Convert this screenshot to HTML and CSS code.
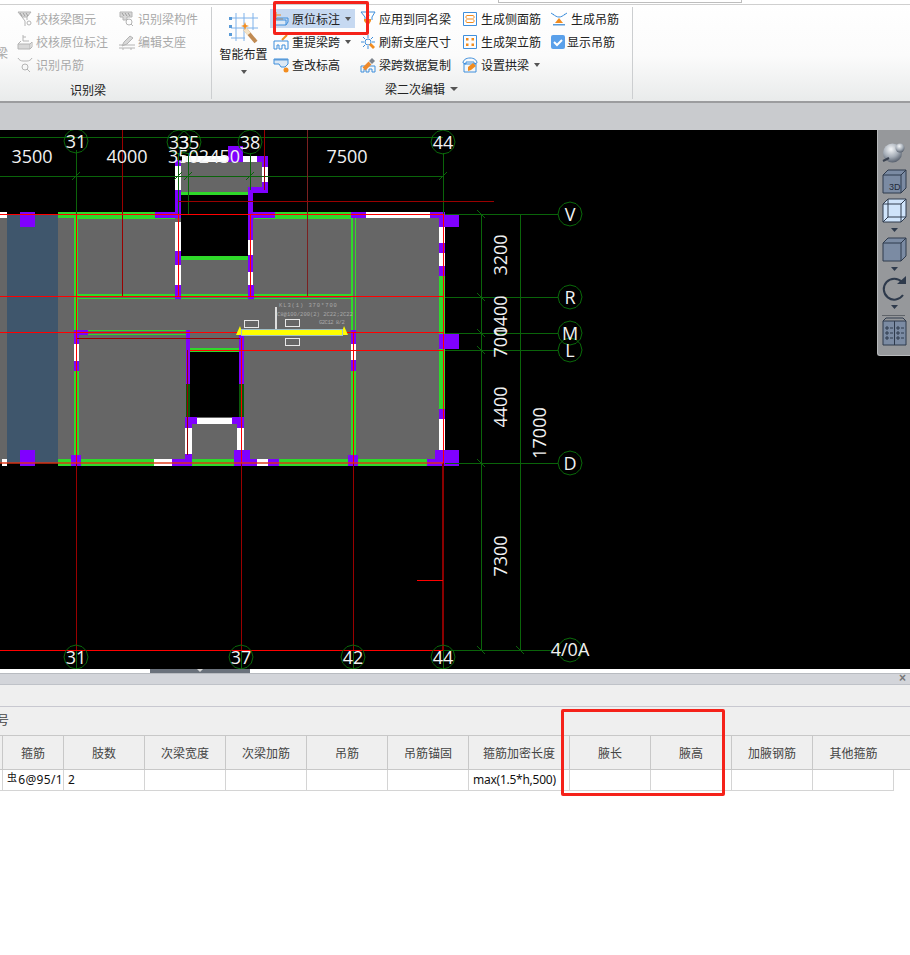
FILE: index.html
```html
<!DOCTYPE html>
<html lang="zh-CN">
<head>
<meta charset="utf-8">
<title>梁二次编辑</title>
<link rel="stylesheet" href="styles.css">
</head>
<body>
<div class="page">
  <header class="ribbon">
    <div class="topstrip"><div class="topbox"></div></div>
    <div class="groups">
      <section class="group g1">
        <div class="rows rows1 off">
          <span class="stub">梁</span>
          <div class="item"><svg class="ic" viewBox="0 0 16 16"><path class="gf" d="M1 1h13l-4 5H5z"/><path class="gl" d="M5 6l3 4v5M10 6v3"/><path class="gh" d="M3 2l2 3M6 2l2 3M9 2l2 3"/><circle class="gl" cx="12" cy="12" r="2"/></svg><span>校核梁图元</span></div>
          <div class="item"><svg class="ic" viewBox="0 0 16 16"><path class="gf" d="M1 1h12v5H8v3H4V6H1z"/><path class="gh" d="M3 2l2 3M6 2l2 3M9 2l2 3"/><circle class="gl" cx="10" cy="11" r="3"/><path class="gl" d="M12 13l2 2"/></svg><span>识别梁构件</span></div>
          <div class="item"><svg class="ic" viewBox="0 0 16 16"><path class="gl" d="M6 1v6h6M6 3h3"/><path class="gf" d="M1 10h12v5H1z"/><path class="gl" d="M1 10l3-3M13 10l2-2v5l-2 2"/></svg><span>校核原位标注</span></div>
          <div class="item"><svg class="ic" viewBox="0 0 16 16"><path class="gf" d="M11 2l3 2-6 6-5 2 2-4z"/><path class="gl" d="M0 11h16M0 14h16M4 14v2M12 14v2"/></svg><span>编辑支座</span></div>
          <div class="item"><svg class="ic" viewBox="0 0 16 16"><path class="gl" d="M1 1c1 2 3 3 5 3h4c2 0 4-1 5-3"/><circle class="gl" cx="8" cy="10" r="3"/><path class="gl" d="M10 12l3 3"/></svg><span>识别吊筋</span></div>
        </div>
        <div class="glabel lab1">识别梁</div>
      </section>
      <section class="group g2">
        <div class="main2">
          <div class="big">
            <svg class="bigic" viewBox="0 0 32 32">
              <path class="bigl" d="M8 1v28M16 1v28M25 1v17M3 6h27M3 16h27M3 26h14"/>
              <path class="bf" d="M1 5h3v3H1zM1 13h3v3H1zM1 21h3v3H1z"/>
              <path class="wand" d="M17 17l11 13"/>
              <path class="wandtip" d="M17 17l4 5"/>
              <path class="or" d="M17 10l1 3 3 1-3 1-1 3-1-3-3-1 3-1z"/>
            </svg>
            <span class="bigt">智能布置</span>
            <i class="caret"></i>
          </div>
          <div class="rows rows2">
            <div class="item hot"><svg class="ic" viewBox="0 0 16 16"><path class="ol" d="M3 1v7h7M3 4h5"/><path class="bb" d="M1 9h12v5H1z"/><path class="bl" d="M1 9l3-2h11v4l-2 3"/></svg><span>原位标注</span><i class="caret"></i></div>
            <div class="item"><svg class="ic" viewBox="0 0 16 16"><path class="bl" d="M1 1h14l-3 5v3M1 1l4 5v3M8 1l1 4"/><path class="or" d="M4 8h7v2l-3 5-4-5z"/></svg><span>应用到同名梁</span></div>
            <div class="item"><svg class="ic" viewBox="0 0 16 16"><path class="bl" d="M1.500 1.500h13v13h-13z"/><path class="ol" d="M4 7V5.500C4 5 4.500 4.500 5 4.500h6c.5 0 1 .5 1 1V7M4 9v1.500c0 .5.5 1 1 1h6c.5 0 1-.5 1-1V9M4 8h8"/></svg><span>生成侧面筋</span></div>
            <div class="item"><svg class="ic" viewBox="0 0 16 16"><path class="bl" d="M2 3c2 2 4 3 6 3s4-1 6-3M0 2l3 2M16 2l-3 2"/><path class="or" d="M8 7l4 5H4z"/><path class="bf" d="M2 13h12v1.500H2z"/></svg><span>生成吊筋</span></div>
            <div class="item"><svg class="ic" viewBox="0 0 16 16"><path class="ol2" d="M14 1L9 6"/><path class="bl" d="M1 7h14v8h-3v-4H9v4H6v-4H4v4H1z"/></svg><span>重提梁跨</span><i class="caret"></i></div>
            <div class="item"><svg class="ic" viewBox="0 0 16 16"><circle class="bl" cx="8" cy="8" r="3"/><path class="bl" d="M8 1v3M8 12v3M1 8h3M12 8h3M3 3l2 2M13 3l-2 2M3 13l2-2"/><path class="or" d="M11 9l4 4-2 2-4-4z"/></svg><span>刷新支座尺寸</span></div>
            <div class="item"><svg class="ic" viewBox="0 0 16 16"><path class="bl" d="M1.500 1.500h13v13h-13z"/><path class="or" d="M4 4h2.500v2.500H4zM9.500 4H12v2.500H9.500zM4 9.500h2.500V12H4zM9.500 9.500H12V12H9.500z"/></svg><span>生成架立筋</span></div>
            <div class="item chk"><svg class="ic14" viewBox="0 0 14 14"><rect class="chkbox" width="14" height="14" rx="2"/><path class="chkmark" d="M3 7l3 3 5-5"/></svg><span>显示吊筋</span></div>
            <div class="item"><svg class="ic" viewBox="0 0 16 16"><path class="bb" d="M1 2h14v5l-3 3H8L6 7H1z"/><path class="bf" d="M1 2h14v1.500H1z"/><circle class="or" cx="13" cy="13" r="2.500"/></svg><span>查改标高</span></div>
            <div class="item"><svg class="ic" viewBox="0 0 16 16"><path class="bl" d="M1 9h14v6h-3v-3H9v3H6v-3H4v3H1z"/><path class="wide" d="M4 12l6-6"/><path class="gf2" d="M9 4l3-3 3 3-3 3z"/></svg><span>梁跨数据复制</span></div>
            <div class="item"><svg class="ic" viewBox="0 0 16 16"><path class="bl" d="M1 6C1 3 4 1 8 1s7 2 7 5l-3 1V5H4v2zM2 7h12v8H2z"/><path class="or" d="M6 10l5-4 3 3-5 4-3 1z"/></svg><span>设置拱梁</span><i class="caret"></i></div>
          </div>
        </div>
        <div class="glabel lab2">梁二次编辑<i class="caret car2"></i></div>
      </section>
    </div>
  </header>
  <div class="band"></div>

  <main class="canvas">
    <svg class="cad" width="910" height="539" viewBox="0 130 910 539">
      <defs>
        <polygon id="bub" points="12,0 10.4,6 6,10.4 0,12 -6,10.4 -10.4,6 -12,0 -10.4,-6 -6,-10.4 0,-12 6,-10.4 10.4,-6"/>
      </defs>
      <!-- slabs -->
      <g class="crisp">
        <rect class="floor" x="0" y="214" width="443" height="249"/>
        <rect class="floor" x="178" y="160" width="86" height="27"/>
        <rect class="floor" x="178" y="187" width="72" height="6"/>
        <rect class="hole" x="181" y="195" width="67" height="61"/>
        <rect class="hole" x="190" y="352" width="49" height="65"/>
        <rect class="slate" x="7" y="214" width="51" height="249"/>
      </g>
      <!-- thin inner green -->
      <g class="crisp">
        <rect class="gr" x="74" y="218" width="4" height="112"/>
        <rect class="gr" x="78" y="218" width="97" height="1"/>
        <rect class="gr" x="78" y="294" width="97" height="2"/>
        <rect class="gr" x="78" y="298" width="273" height="1"/>
        <rect class="gr" x="181" y="294" width="67" height="2"/>
        <rect class="gr" x="254" y="294" width="97" height="2"/>
        <rect class="gr" x="254" y="218" width="97" height="1"/>
        <rect class="gr" x="351" y="218" width="2" height="112"/>
        <rect class="gr" x="355" y="218" width="1" height="112"/>
        <rect class="gr" x="354" y="371" width="2" height="84"/>
        <rect class="gr" x="351" y="371" width="2" height="84"/>
        <rect class="gr" x="74" y="371" width="5" height="84"/>
        <rect class="gr" x="88" y="330" width="98" height="1"/>
        <rect class="gr" x="88" y="334" width="98" height="1"/>
        <rect class="gr" x="181" y="192" width="67" height="3"/>
        <rect class="gr" x="181" y="256" width="67" height="4"/>
        <rect class="gr" x="190" y="348" width="49" height="4"/>
        <rect class="gr" x="439" y="276" width="6" height="58"/>
        <rect class="gr" x="439" y="349" width="6" height="60"/>
        <rect class="dg" x="186" y="384" width="4" height="33"/>
        <rect class="dg" x="239" y="384" width="5" height="33"/>
      </g>
      <!-- top wall -->
      <g class="crisp">
        <rect class="gr" x="58" y="212" width="97" height="6"/>
        <rect class="gr" x="275" y="212" width="76" height="6"/>
        <rect class="wh" x="0" y="212" width="7" height="6"/>
        <rect class="pu" x="155" y="212" width="23" height="6"/>
        <rect class="pu" x="178" y="212" width="3" height="6"/>
        <rect class="pu" x="250" y="212" width="25" height="6"/>
        <rect class="pu" x="351" y="212" width="15" height="6"/>
        <rect class="wh" x="366" y="212" width="64" height="6"/>
        <rect class="pu" x="430" y="212" width="15" height="6"/>
        <rect class="pu" x="20" y="212" width="15" height="15"/>
        <rect class="pu" x="443" y="215" width="16" height="12"/>
      </g>
      <!-- bottom wall -->
      <g class="crisp">
        <rect class="wh" x="2" y="459" width="5" height="7"/>
        <rect class="gr" x="58" y="459" width="13" height="7"/>
        <rect class="gr" x="81" y="459" width="73" height="7"/>
        <rect class="wh" x="154" y="459" width="18" height="7"/>
        <rect class="pu" x="172" y="459" width="20" height="7"/>
        <rect class="gr" x="192" y="459" width="42" height="7"/>
        <rect class="pu" x="250" y="459" width="7" height="7"/>
        <rect class="wh" x="257" y="459" width="11" height="7"/>
        <rect class="pu" x="268" y="459" width="11" height="7"/>
        <rect class="gr" x="279" y="459" width="69" height="7"/>
        <rect class="gr" x="358" y="459" width="69" height="7"/>
        <rect class="pu" x="427" y="459" width="8" height="7"/>
        <rect class="pu" x="20" y="450" width="15" height="16"/>
        <rect class="pu" x="71" y="455" width="10" height="11"/>
        <rect class="pu" x="234" y="450" width="16" height="16"/>
        <rect class="pu" x="348" y="455" width="10" height="11"/>
        <rect class="pu" x="435" y="450" width="24" height="16"/>
      </g>
      <!-- right wall -->
      <g class="crisp">
        <rect class="pu" x="439" y="215" width="6" height="12"/>
        <rect class="wh" x="439" y="227" width="6" height="16"/>
        <rect class="pu" x="439" y="243" width="6" height="10"/>
        <rect class="wh" x="439" y="253" width="6" height="13"/>
        <rect class="pu" x="439" y="266" width="6" height="10"/>
        <rect class="pu" x="439" y="334" width="20" height="15"/>
        <rect class="pu" x="439" y="409" width="6" height="10"/>
        <rect class="wh" x="439" y="419" width="6" height="31"/>
      </g>
      <!-- left + inner walls -->
      <g class="crisp">
        <rect class="pu" x="74" y="330" width="14" height="5"/>
        <rect class="pu" x="74" y="335" width="5" height="9"/>
        <rect class="wh" x="74" y="344" width="5" height="17"/>
        <rect class="pu" x="74" y="361" width="5" height="10"/>
        <rect class="pu" x="186" y="330" width="4" height="54"/>
        <rect class="pu" x="239" y="335" width="5" height="49"/>
        <rect class="pu" x="185" y="417" width="12" height="7"/>
        <rect class="wh" x="197" y="418" width="35" height="6"/>
        <rect class="pu" x="232" y="417" width="12" height="7"/>
        <rect class="pu" x="185" y="424" width="7" height="4"/>
        <rect class="pu" x="237" y="424" width="7" height="4"/>
        <rect class="wh" x="185" y="428" width="7" height="26"/>
        <rect class="pu" x="185" y="454" width="7" height="5"/>
        <rect class="wh" x="237" y="428" width="7" height="22"/>
        <rect class="pu" x="351" y="330" width="5" height="14"/>
        <rect class="wh" x="351" y="344" width="5" height="16"/>
        <rect class="pu" x="351" y="360" width="5" height="11"/>
      </g>
      <!-- annex -->
      <g class="crisp">
        <rect class="wh" x="175" y="166" width="6" height="24"/>
        <rect class="pu" x="175" y="160" width="6" height="6"/>
        <rect class="pu" x="175" y="190" width="6" height="22"/>
        <rect class="wh" x="175" y="222" width="6" height="29"/>
        <rect class="pu" x="175" y="251" width="6" height="14"/>
        <rect class="wh" x="175" y="265" width="6" height="20"/>
        <rect class="pu" x="175" y="285" width="6" height="14"/>
        <rect class="wh" x="182" y="156" width="75" height="6"/>
        <rect class="pu" x="228" y="146" width="15" height="16"/>
        <rect class="pu" x="257" y="156" width="11" height="6"/>
        <rect class="pu" x="262" y="162" width="6" height="5"/>
        <rect class="wh" x="262" y="167" width="6" height="15"/>
        <rect class="pu" x="262" y="182" width="6" height="11"/>
        <rect class="pu" x="248" y="187" width="20" height="6"/>
        <rect class="pu" x="248" y="193" width="5" height="47"/>
        <rect class="wh" x="248" y="240" width="5" height="15"/>
        <rect class="pu" x="248" y="255" width="5" height="17"/>
        <rect class="wh" x="248" y="272" width="5" height="13"/>
        <rect class="pu" x="248" y="285" width="6" height="14"/>
      </g>
      <!-- dark green dimension + axes -->
      <g class="crisp dim">
        <path d="M0 137.500H443M0 176.500H443"/>
        <path d="M76.500 150V214M178.500 153V214M188.500 153V214M250.500 153V190M443.500 153V214"/>
        <path d="M445 214.500H558M445 297.500H558M445 333.500H558M445 350.500H558M445 463.500H558M443 650.500H552"/>
        <path d="M481.500 214V650M520.500 214V650"/>
        <path d="M76.500 645V669M241.500 645V669M353.500 645V669M443.500 645V669"/>
      </g>
      <path class="tick" d="M72 180l8-8M174 180l8-8M184 180l8-8M246 180l8-8M439 180l8-8"/>
      <path class="tick" d="M477 210l8 8M477 293l8 8M477 329l8 8M477 346l8 8M477 459l8 8M477 646l8 8M516 646l8 8"/>
      <!-- red axes -->
      <g class="crisp">
        <path class="drk" d="M122.500 130V297M264.500 130V190M76.500 463V650M187.500 350V455M241.500 463V650M353.500 463V650"/>
        <path class="brn" d="M307.500 130V297"/>
        <path class="drk2" d="M443 463V650"/>
        <path class="drk" d="M178 201H494"/>
        <path class="drk" d="M76 338.500H240"/>
        <path class="red" d="M0 214.500H443M0 296.500H443M0 332.500H443M190 350.500H443M0 650.500H443M417 580.500H443"/>
        <path class="red" d="M76.500 214V463M178.500 214V297M250.500 214V297M443.500 214V463M241.500 338V463M353.500 332V463"/>
        <path class="redb" d="M0 463H443"/>
      </g>
      <!-- yellow beam and notes -->
      <polygon class="yl" points="236,335 240,326 243,335"/>
      <polygon class="yl" points="341,335 344,326 348,335"/>
      <rect class="ybar" x="241.500" y="329.500" width="101" height="6"/>
      <rect class="note" x="244.500" y="320.500" width="14" height="7"/>
      <rect class="note" x="285.500" y="319.500" width="14" height="7"/>
      <rect class="note" x="285.500" y="338.500" width="14" height="7"/>
      <rect class="notebar" x="275" y="307" width="2" height="22"/>
      <text class="tiny t1" x="279" y="307">KL3(1) 370*700</text>
      <text class="tiny" x="277" y="316">C8@100/200(2) 2C22;2C22</text>
      <text class="tiny t3" x="319" y="324">G2C12 8/2</text>
      <!-- bubbles -->
      <g class="bubs">
        <use href="#bub" x="76" y="141"/><use href="#bub" x="179" y="142"/><use href="#bub" x="189" y="142"/>
        <use href="#bub" x="250" y="142"/><use href="#bub" x="443" y="142"/>
        <use href="#bub" x="570" y="214"/><use href="#bub" x="570" y="297"/><use href="#bub" x="570" y="333"/>
        <use href="#bub" x="570" y="350"/><use href="#bub" x="570" y="463"/>
        <use href="#bub" x="76" y="657"/><use href="#bub" x="241" y="657"/><use href="#bub" x="353" y="657"/>
        <use href="#bub" x="443" y="657"/><use href="#bub" x="570" y="650"/>
      </g>
      <!-- labels -->
      <g class="cadt mid">
        <text x="76" y="148">31</text><text x="179" y="149">33</text><text x="189" y="149">35</text>
        <text x="250" y="149">38</text><text x="443" y="149">44</text>
        <text x="570" y="221">V</text><text x="570" y="304">R</text><text x="570" y="340">M</text>
        <text x="570" y="357">L</text><text x="570" y="470">D</text>
        <text x="76" y="664">31</text><text x="241" y="664">37</text><text x="353" y="664">42</text><text x="443" y="664">44</text>
        <text x="570" y="656">4/0A</text>
        <text x="32" y="163">3500</text><text x="127" y="163">4000</text><text x="204" y="163">3502450</text><text x="347" y="163">7500</text>
        <text transform="translate(507 255) rotate(-90)">3200</text>
        <text transform="translate(507 316) rotate(-90)">1400</text>
        <text transform="translate(507 342) rotate(-90)">700</text>
        <text transform="translate(507 407) rotate(-90)">4400</text>
        <text transform="translate(546 433) rotate(-90)">17000</text>
        <text transform="translate(507 556) rotate(-90)">7300</text>
      </g>
    </svg>

    <aside class="viewtools">
      <svg width="27" height="26" viewBox="0 0 27 26">
        <defs><radialGradient id="sph" cx=".42" cy=".3" r=".75"><stop offset="0" stop-color="#f4f6f8"/><stop offset=".55" stop-color="#a4acb6"/><stop offset="1" stop-color="#4c5563"/></radialGradient></defs>
        <circle cx="10.500" cy="12" r="9.500" fill="url(#sph)"/>
        <circle cx="18" cy="7" r="4.500" fill="url(#sph)"/>
        <path class="tk2" d="M1 20l6-3"/>
      </svg>
      <svg width="27" height="29" viewBox="0 0 27 29">
        <path class="cube" d="M1 8l5-5h18v18l-5 5H1z"/><path class="tk" d="M1 8h18v18M19 8l5-5"/>
        <text class="c3d" x="7" y="23">3D</text>
      </svg>
      <svg width="27" height="28" viewBox="0 0 27 28">
        <path class="wire" d="M1 8l5-5h18v18l-5 5H1z"/><path class="tk" d="M1 8h18v18M19 8l5-5M6 3v18h18M6 21l-5 5"/>
      </svg>
      <svg width="27" height="12" viewBox="0 0 27 12"><path class="tri" d="M9 4h7l-3.500 4z"/></svg>
      <svg width="27" height="27" viewBox="0 0 27 27">
        <path class="cube" d="M1 7l5-5h18v18l-5 5H1z"/><path class="tk" d="M1 7h18v18M19 7l5-5"/>
      </svg>
      <svg width="27" height="12" viewBox="0 0 27 12"><path class="tri" d="M9 4h7l-3.500 4z"/></svg>
      <svg width="27" height="28" viewBox="0 0 27 28">
        <path class="rot" d="M21 20A10.500 10.500 0 1 1 20 7"/><path class="tri" d="M15 9h9V1z"/>
      </svg>
      <svg width="27" height="10" viewBox="0 0 27 10"><path class="tri" d="M9 2h7l-3.500 4z"/></svg>
      <div class="vsep"></div>
      <svg width="27" height="30" viewBox="0 0 27 30">
        <path class="cube" d="M1 5h23v24H1z"/><path class="tk" d="M1 5l3-3h17l3 3M12.500 5v24M4 11h2v2H4zM4 16h2v2H4zM4 21h2v2H4zM15 11h2v2h-2zM15 16h2v2h-2zM15 21h2v2h-2zM8 12h3M8 17h3M8 22h3M19 12h3M19 17h3M19 22h3"/>
      </svg>
    </aside>
  </main>

  <div class="splitter"><div class="grip"><i class="griptri"></i></div></div>

  <section class="panel">
    <div class="ptitle"><span class="pclose">×</span></div>
    <div class="pbar"></div>
    <div class="pbar2"><span>号</span></div>
    <div class="tgrid thead">
      <div></div><div>箍筋</div><div>肢数</div><div>次梁宽度</div><div>次梁加筋</div><div>吊筋</div><div>吊筋锚固</div><div>箍筋加密长度</div><div>腋长</div><div>腋高</div><div>加腋钢筋</div><div>其他箍筋</div>
    </div>
    <div class="tgrid tbody">
      <div></div><div class="wide-t"><sup class="rb">虫</sup>6@95/1</div><div>2</div><div></div><div></div><div></div><div></div><div class="tight">max(1.5*h,500)</div><div></div><div></div><div></div><div></div>
    </div>
  </section>

  <div class="mark m1"></div>
  <div class="mark m2"></div>
</div>
</body>
</html>
```
FILE: styles.css
```css
* { box-sizing: border-box; }
html, body { margin: 0; padding: 0; background: #fff; }
.page {
  position: relative;
  width: 910px;
  height: 955px;
  overflow: hidden;
  font: 12px/1 "Noto Sans CJK SC", "Noto Sans", sans-serif;
  color: #222;
}

/* ribbon */
.ribbon {
  height: 103px;
  background: linear-gradient(#ffffff 0%, #fbfbfb 55%, #e9ebeb 100%);
  border-bottom: 2px solid #9b9c9e;
}
.topstrip { height: 5px; padding-left: 498px; border-bottom: 1px solid #cfcfcf; background: #fff; }
.topbox { width: 244px; height: 3px; border: 1px solid #bdbdbd; border-top: 0; background: #fff; }
.groups { display: flex; }
.group { margin-top: 2px; height: 92px; border-right: 1px solid #ccced0; }
.g1 { width: 212px; }
.g2 { width: 421px; }
.rows { display: grid; grid-auto-rows: 23px; }
.rows1 { grid-template-columns: 17px 102px auto; overflow: hidden; }
.stub { grid-row: 2 / 4; grid-column: 1; align-self: center; margin-left: -4px; color: #a8a8a8; }
.rows1 .item:nth-child(2), .rows1 .item:nth-child(4), .rows1 .item:nth-child(6) { grid-column: 2; }
.rows1 .item:nth-child(3), .rows1 .item:nth-child(5) { grid-column: 3; }
.item { display: flex; align-items: center; gap: 3px; white-space: nowrap; }
.off { color: #a9a9a9; }
.ic { width: 16px; height: 16px; flex: none; }
.ic14 { width: 14px; height: 14px; flex: none; }
.rows2 .item:nth-child(4) { gap: 4px; }
.rows2 .item.chk { gap: 2px; }
.glabel { height: 18px; line-height: 18px; margin-top: 5px; }
.lab1 { padding-left: 70px; }
.lab2 { padding-left: 173px; margin-top: 4px; display: flex; align-items: center; }
.main2 { display: flex; padding-left: 7px; }
.big { width: 49px; display: flex; flex-direction: column; align-items: center; padding-top: 5px; }
.bigic { width: 32px; height: 32px; }
.bigt { margin-top: 4px; }
.big .caret { margin: 10px 0 0; }
.rows2 { margin-left: 5px; grid-template-columns: 87px 102px 89px auto; }
.hot { background: #c6d9f1; margin-left: -3px; padding-left: 3px; width: 85px; height: 19px; margin-top: 2px; }
.caret { display: inline-block; width: 0; height: 0; border: 3px solid transparent; border-top: 4px solid #555; border-bottom: 0; margin-left: 2px; }
.car2 { margin-left: 5px; border-width: 4px; border-top-width: 4px; border-bottom: 0; }

.gl { fill: none; stroke: #b4b4b4; stroke-width: 1; }
.gh { fill: none; stroke: #9c9c9c; stroke-width: 1; }
.gf { fill: #d8d8d8; stroke: #b4b4b4; }
.bl { fill: none; stroke: #3f8fdc; stroke-width: 1; }
.bigl { fill: none; stroke: #7fb2ea; stroke-width: 1; }
.bf { fill: #5a9bd8; }
.bb { fill: #dbe8f5; stroke: #3f8fdc; }
.or { fill: #f28c1e; }
.ol { fill: none; stroke: #f28c1e; stroke-width: 1; }
.ol2 { fill: none; stroke: #f28c1e; stroke-width: 2; }
.wide { fill: none; stroke: #ee8a2c; stroke-width: 4; }
.wand { fill: none; stroke: #c08a52; stroke-width: 4; }
.wandtip { fill: none; stroke: #f4e4c8; stroke-width: 4; }
.gf2 { fill: #7e848c; }
.chkbox { fill: #5aa0ea; }
.chkmark { fill: none; stroke: #fff; stroke-width: 2; }

.band { height: 27px; background: #c9cbce; }

/* canvas */
.canvas { position: relative; height: 539px; background: #000; overflow: hidden; }
.cad { display: block; }
.crisp { shape-rendering: crispEdges; }
.floor { fill: #666; }
.hole { fill: #000; }
.slate { fill: #3f566c; }
.gr { fill: #2fd92a; }
.dg { fill: #0a5a0a; }
.pu { fill: #8000ff; }
.wh { fill: #fff; }
.yl { fill: #ffff00; }
.ybar { fill: #ffff00; stroke: #9fc0c8; stroke-width: 1; }
.note { fill: none; stroke: #e8e8e8; stroke-width: 1; }
.notebar { fill: #ddd; }
.tiny { font: 5.500px "Liberation Mono", monospace; fill: #a8a8a8; }
.t1 { letter-spacing: .9px; }
.t3 { letter-spacing: -.5px; }
.dim path { fill: none; stroke: #0a640a; stroke-width: 1; }
.tick { fill: none; stroke: #0a640a; stroke-width: 1; }
.red { fill: none; stroke: #ff0000; stroke-width: 1; }
.redb { fill: none; stroke: #e03010; stroke-width: 2; opacity: .7; }
.drk { fill: none; stroke: #9a0000; stroke-width: 1; }
.drk2 { fill: none; stroke: #8a0000; stroke-width: 2; }
.brn { fill: none; stroke: #7a2020; stroke-width: 1; }
.bubs use { fill: none; stroke: #0a6a0a; stroke-width: 1; }
.cadt text { font: 18px "Open Sans", "Liberation Sans", sans-serif; fill: #f2f2f2; text-anchor: middle; }

/* floating view tools */
.viewtools {
  position: absolute;
  top: 0;
  right: 0;
  width: 33px;
  height: 226px;
  padding: 11px 0 0 4px;
  display: flex;
  flex-direction: column;
  background: #96989b;
  border-left: 1px solid #b8babc;
  border-bottom: 1px solid #b8babc;
  border-radius: 0 0 0 3px;
}
.viewtools svg { display: block; flex: none; }
.vsep { height: 1px; background: #5f6369; margin: 2px 0 0 0; width: 23px; flex: none; }
.tk { fill: none; stroke: #2e3a4c; stroke-width: 1; }
.tk2 { fill: none; stroke: #3a4250; stroke-width: 2; }
.cube { fill: #7b8ba3; stroke: #2e3a4c; stroke-width: 1; }
.wire { fill: #cfe4fb; stroke: #2e3a4c; stroke-width: 1; }
.tri { fill: #2e3a4c; }
.rot { fill: none; stroke: #2e3a4c; stroke-width: 2; }
.c3d { font: 9px "Liberation Sans", sans-serif; fill: #1f2a3a; }

/* splitter */
.splitter { height: 4px; background: #fff; padding-left: 150px; }
.grip { width: 100px; height: 4px; background: #6b727c; display: flex; justify-content: center; }
.griptri { width: 0; height: 0; border: 3px solid transparent; border-top: 3px solid #d8d8d8; border-bottom: 0; }

/* bottom panel */
.panel { background: #fff; color: #444; }
.ptitle { height: 12px; background: #d3d5da; border-top: 1px solid #b8bbc0; border-bottom: 1px solid #bfc2c8; display: flex; justify-content: flex-end; padding-right: 4px; }
.pclose { font: bold 12px/9px "Liberation Sans", sans-serif; color: #777; }
.pbar { height: 22px; background: #efefef; border-bottom: 1px solid #c8c8d0; }
.pbar2 { height: 29px; background: #efefef; padding-top: 7px; border-bottom: 1px solid #c8c8c8; }
.pbar2 span { margin-left: -3px; display: block; }
.tgrid { display: grid; grid-template-columns: 3px 61px repeat(5, 81px) 101px repeat(4, 81px) 1fr; }
.thead { height: 34px; background: #efefef; border-bottom: 1px solid #c8c8c8; }
.thead div { display: flex; align-items: center; justify-content: center; border-right: 1px solid #c8c8c8; }
.thead div:last-child { border-right: 0; }
.tbody { height: 21px; color: #111; }
.tbody div {
  display: flex; align-items: center; padding-left: 4px;
  border-right: 1px solid #d4d4d4; border-bottom: 1px solid #d4d4d4;
  font-family: "Noto Sans", sans-serif; white-space: nowrap;
}
.tbody div:nth-child(1) { padding: 0; }
.wide-t { letter-spacing: .3px; }
.tight { letter-spacing: -.25px; }
.rb { font: 10px/1 "Noto Sans CJK SC", sans-serif; margin: -6px 1px 0 0; }

/* red annotations */
.mark { position: absolute; border: 3px solid #f5221a; border-radius: 2px; }
.m1 { left: 273px; top: 1px; width: 96px; height: 34px; }
.m2 { left: 561px; top: 709px; width: 164px; height: 87px; }
```
